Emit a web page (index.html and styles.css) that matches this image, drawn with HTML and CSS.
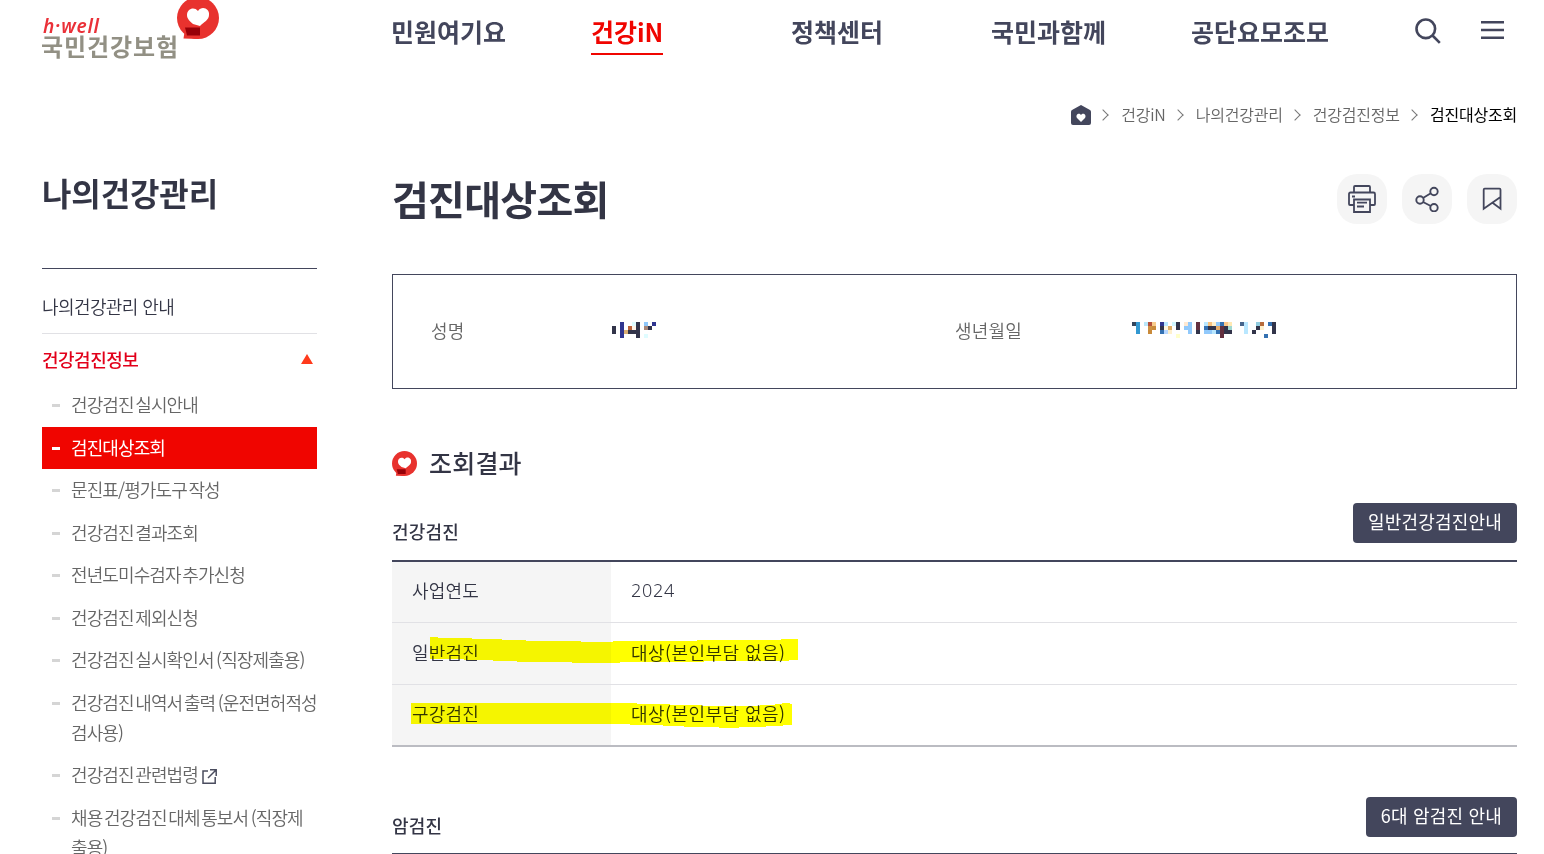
FILE: index.html
```
<!DOCTYPE html>
<html lang="ko">
  <head>
    <meta charset="UTF-8" />
    <meta name="viewport" content="width=device-width, initial-scale=1.0" />
    <title>검진대상조회</title>
    <link rel="stylesheet" href="styles.css">
  </head>
  <body>
    <svg width="0" height="0" class="defs">
      <symbol id="mark" viewBox="0 0 42 42">
        <circle cx="21" cy="21" r="21" fill="#e8322e" />
        <path d="M8 32 6.500 41.500 21 42V32Z" fill="#e8322e" />
        <path d="M21 14c4-6 12-2 11 4 0 5-5 7-9 11l-7-2c-3-3-6-5-6-9 0-6 7-9 11-4Z" fill="#fff" />
        <path d="M8 30.500h15v8H10Z" fill="#970008" />
      </symbol>
    </svg>
    <header class="header">
      <a class="logo">
        <svg width="180" height="62">
          <text x="1" y="33" class="logoEn" textLength="56">h·well</text>
          <text x="-1" y="56" class="logoKo" textLength="137">국민건강보험</text>
          <use href="#mark" x="135" y="-3" width="42" height="42" />
        </svg>
      </a>
      <nav class="nav">
        <a><span>민원여기요</span></a>
        <a class="on"><span>건강iN</span></a>
        <a><span>정책센터</span></a>
        <a><span>국민과함께</span></a>
        <a><span>공단요모조모</span></a>
      </nav>
      <div class="tools">
        <svg width="26" height="26" fill="none" stroke="#43465c" stroke-width="2.600">
          <circle cx="10.800" cy="10.800" r="9.300" />
          <path d="m17.500 17.500 7.300 7.300" />
        </svg>
        <svg width="23" height="18" fill="#43465c">
          <path d="M0 0h23v2.500H0ZM0 7.800h23v2.500H0ZM0 15.500h23V18H0Z" />
        </svg>
      </div>
    </header>
    <div class="path">
      <svg width="20" height="20">
        <path d="M10 0 19 5q1 .5 1 2v11q0 2-2 2H2q-2 0-2-2V7q0-1.500 1-2Z" fill="#43465c" />
        <path d="M10 17 6 13c-2-3 2-6 4-3 2-3 6 0 4 3Z" fill="#fff" />
      </svg>
      <i></i><span>건강iN</span>
      <i></i><span>나의건강관리</span>
      <i></i><span>건강검진정보</span>
      <i></i><b>검진대상조회</b>
    </div>
    <div class="container">
      <aside class="side">
        <h2>나의건강관리</h2>
        <div class="menu">
          <a class="depth1">나의건강관리 안내</a>
          <a class="depth1 open">건강검진정보
            <svg width="12" height="10"><path d="M6 0 12 10H0Z" fill="#ff3a1c" /></svg>
          </a>
          <ul>
            <li>건강검진 실시안내</li>
            <li class="active">검진대상조회</li>
            <li>문진표/평가도구 작성</li>
            <li>건강검진 결과조회</li>
            <li>전년도미수검자 추가신청</li>
            <li>건강검진 제외신청</li>
            <li>건강검진 실시확인서<span>(</span>직장제출용)</li>
            <li>건강검진 내역서 출력<span>(</span>운전면허적성<br>검사용)</li>
            <li>건강검진 관련법령
              <svg width="15" height="15" fill="none" stroke="#4a4c5e" stroke-width="1.500"><path d="M6 2H1v12.200h12.200V8M8 .8h6.200V7M14 1 6 9" /></svg>
            </li>
            <li>채용 건강검진 대체 통보서<span>(</span>직장제<br>출용)</li>
          </ul>
        </div>
      </aside>
      <main class="content">
        <div class="titleRow">
          <h1>검진대상조회</h1>
          <div class="btns">
            <a>
              <svg width="28" height="28" fill="none" stroke="#43465c" stroke-width="1.800">
                <path d="M6 7.500V2q0-1 1-1h14q1 0 1 1v5.500M6 20H2q-1 0-1-1V9q0-1.500 1.500-1.500h23Q27 7.500 27 9v10q0 1-1 1h-4M6 14.500h16V27H6Z" />
                <path d="M4 11.500h3M9 17.700h10M9 21.500h7" />
              </svg>
            </a>
            <a>
              <svg width="24" height="26" fill="none" stroke="#43465c" stroke-width="1.900">
                <circle cx="5" cy="14" r="3.700" /><circle cx="19" cy="5.500" r="3.700" /><circle cx="19" cy="21.700" r="3.700" />
                <path d="m8 12 7.800-4.700M8 16l7.800 4" />
              </svg>
            </a>
            <a>
              <svg width="20" height="24" fill="none" stroke="#43465c" stroke-width="1.800">
                <path d="M18.500 10 1.700 21.700V2.700q0-1 1-1h14.800q1 0 1 1v19l-8-6" />
              </svg>
            </a>
          </div>
        </div>
        <div class="person">
          <span class="label">성명</span>
          <svg class="mosaic" id="name" width="46" height="16" shape-rendering="crispEdges"></svg>
          <span class="label">생년월일</span>
          <svg class="mosaic" id="birth" width="146" height="16" shape-rendering="crispEdges"></svg>
        </div>
        <h3><svg width="25" height="25"><use href="#mark" width="25" height="25" /></svg><span>조회결과</span></h3>
        <div class="tableHead">
          <h4>건강검진</h4>
          <a class="btn">일반건강검진안내</a>
        </div>
        <div class="table">
          <div class="row"><div class="th">사업연도</div><div class="td year">2024</div></div>
          <div class="row"><div class="th">일반검진</div><div class="td">대상(본인부담 없음)</div></div>
          <div class="row"><div class="th">구강검진</div><div class="td">대상(본인부담 없음)</div></div>
          <svg class="marker" width="420" height="110" fill="#ff0" shape-rendering="crispEdges">
            <path d="M38 1h8v1h34v1h30v1h24v1h55v1h32V5h84V4h84V3h17v21h-9v1h-85v1h-84v1h-48v-1h-55v-1h-24v-1H72v-1H38Z" />
            <path d="M19 67h226v1h33v1h32v1h58v-1h15v-1h7v-1h8v1h2v21h-9v1h-17v1h-27v1h-20v-1h-35v-1h-21v-1h-33v-1H19Z" />
          </svg>
        </div>
        <div class="tableHead second">
          <h4>암검진</h4>
          <a class="btn">6대 암검진 안내</a>
        </div>
        <div class="table"></div>
      </main>
    </div>
    <script>
      // Masked values: x, y, length, color (4px cells)
      const d = "#32344a";
      const masks = {
        name: [
          [0, 1, 1, d], [0, 2, 1, d],
          [2, 0, 1, "#30358f"], [2, 1, 1, "#30358f"], [2, 2, 1, "#30358f"], [2, 3, 1, "#30358f"],
          [3, 2, 1, "#d9ae73"], [4, 1, 1, "#bb6239"], [5, 0, 1, "#dffcff"], [5, 1, 1, "#fff3e6"],
          [4, 2, 3, d], [6, 0, 1, d], [6, 1, 1, d], [6, 3, 1, d],
          [8, 0, 1, "#8fc8fb"], [8, 1, 1, "#a78678"], [9, 1, 1, d], [10, 0, 1, "#30358f"], [8, 3, 1, "#dffcff"]
        ],
        birth: [
          [0, 0, 1, "#34465d"], [1, 0, 1, "#3298d1"], [3, 0, 1, "#b9e7fa"], [4, 0, 1, "#b3503c"], [5, 0, 1, "#f8cc8c"],
          [7, 0, 1, "#30358f"], [8, 0, 1, "#b9e7ff"], [10, 0, 1, "#d0f5ff"], [11, 0, 1, d], [13, 0, 1, "#ffe9d2"],
          [14, 0, 1, "#91c9fb"], [16, 0, 1, "#63303f"], [18, 0, 1, "#b9e7ff"], [19, 0, 1, "#f8c17c"], [20, 0, 1, "#fff0cc"],
          [21, 0, 1, "#91c9fb"], [22, 0, 1, "#3471b2"], [23, 0, 1, "#fbc88a"], [24, 0, 1, "#ffe9b4"],
          [27, 0, 1, "#46648b"], [28, 0, 1, "#b9e7ff"], [31, 0, 1, "#90cce0"], [32, 0, 1, "#b76b3a"], [34, 0, 1, "#3471b2"], [35, 0, 1, d],
          [1, 1, 1, "#3298d1"], [4, 1, 1, "#ce9142"], [5, 1, 1, "#c98a3a"], [7, 1, 1, d], [8, 1, 1, "#fff6df"], [9, 1, 1, "#dfad65"],
          [11, 1, 1, d], [13, 1, 2, "#91c9fb"], [16, 1, 1, "#63303f"], [18, 1, 1, "#3471b2"], [19, 1, 2, d],
          [21, 1, 1, "#e6ad6b"], [22, 1, 1, "#63303f"], [23, 1, 1, d], [24, 1, 1, "#a0d7cf"], [28, 1, 1, "#b9e7ff"],
          [31, 1, 1, d], [32, 1, 1, "#fff0cc"], [35, 1, 1, d],
          [1, 2, 1, "#3298d1"], [4, 2, 1, "#c98a3a"], [7, 2, 1, "#3471b2"], [8, 2, 1, "#b9d8ff"], [9, 2, 1, "#fff0cc"],
          [14, 2, 1, "#91c9fb"], [16, 2, 1, d], [18, 2, 2, "#91c9fb"], [20, 2, 1, "#b9e7ff"], [21, 2, 1, "#3471b2"],
          [22, 2, 1, "#63303f"], [23, 2, 2, d], [28, 2, 1, "#b9e7ff"], [30, 2, 1, d], [35, 2, 1, d],
          [11, 3, 1, "#ffffca"], [22, 3, 1, "#63303f"], [33, 3, 1, "#3471b2"]
        ]
      };
      for (const id in masks) {
        document.querySelector("#" + id).innerHTML = masks[id]
          .map(([x, y, w, c]) => `<rect x="${x * 4}" y="${y * 4}" width="${w * 4}" height="4" fill="${c}"/>`)
          .join("");
      }
    </script>
  </body>
</html>
```
FILE: styles.css
```
* {
  box-sizing: border-box;
}
body {
  margin: 0;
  height: 854px;
  overflow: hidden;
  background: #fff;
  color: #333545;
  font-family: "Noto Sans CJK KR", sans-serif;
  font-size: 18px;
  font-weight: 350;
}
h1, h2, h3, h4, ul {
  margin: 0;
  padding: 0;
}
svg {
  display: block;
  flex: none;
}
.defs {
  position: absolute;
}
.header {
  display: flex;
  height: 75px;
  padding-left: 42px;
}
.logo {
  width: 349px;
}
.logoEn {
  font: italic 600 19px "Noto Sans", sans-serif;
  fill: #ea3038;
}
.logoKo {
  font-size: 24px;
  font-weight: 700;
  fill: #929084;
}
.nav {
  display: flex;
  width: 1024px;
}
.nav a {
  width: 200px;
  padding-top: 11px;
  font-size: 25px;
  font-weight: 700;
  line-height: 40px;
  white-space: nowrap;
  color: #43465c;
}
.nav span {
  display: inline-block;
  height: 44px;
}
.nav .on span {
  color: #f00500;
  border-bottom: 2px solid #f00500;
}
.tools {
  display: flex;
  gap: 40px;
  padding-top: 18px;
}
.tools svg + svg {
  margin-top: 3px;
}
.path {
  display: flex;
  justify-content: flex-end;
  align-items: center;
  height: 80px;
  padding-right: 27px;
  font-size: 16px;
  letter-spacing: -0.2px;
  color: #666;
}
.path span, .path b {
  padding-bottom: 2px;
}
.path b {
  font-weight: 400;
  color: #000;
}
.path i {
  width: 8px;
  height: 8px;
  margin: 0 14px 0 8px;
  border: solid #777;
  border-width: 1px 1px 0 0;
  transform: rotate(45deg);
}
.container {
  display: flex;
  gap: 75px;
  padding: 0 27px 0 42px;
}
.side {
  width: 275px;
}
.side h2 {
  height: 113px;
  padding-top: 13px;
  font-size: 32px;
  line-height: 48px;
  letter-spacing: -0.1px;
}
.menu {
  border-top: 1px solid #43465c;
  padding-top: 12px;
  letter-spacing: -0.9px;
}
.depth1 {
  display: flex;
  justify-content: space-between;
  align-items: center;
  height: 53px;
  padding-bottom: 2px;
  border-bottom: 1px solid #e1e1e5;
  letter-spacing: -0.6px;
}
.depth1.open {
  height: 50px;
  padding: 0 4px 0 0;
  border: 0;
  font-weight: 500;
  letter-spacing: -0.5px;
  color: #e2001a;
}
.side ul {
  list-style: none;
}
.side li {
  padding: 5px 0 7.5px 29px;
  line-height: 30px;
  white-space: nowrap;
  word-spacing: -2.5px;
  color: #666;
}
.side li::before {
  content: "";
  display: inline-block;
  width: 8px;
  height: 3px;
  margin: 0 11px 0 -19px;
  vertical-align: 5px;
  background: #d5d5d5;
}
.side li span {
  margin-left: 2.5px;
}
.side li svg {
  display: inline-block;
  margin-left: 2px;
  vertical-align: -2px;
}
.side .active {
  background: #f00500;
  color: #fff;
  font-weight: 400;
}
.side .active::before {
  background: #fff;
}
.content {
  width: 1125px;
}
.titleRow {
  display: flex;
  justify-content: space-between;
  height: 119px;
  padding-top: 19px;
}
h1 {
  margin-top: -1px;
  font-size: 40px;
  line-height: 50px;
  letter-spacing: -0.7px;
}
.btns {
  display: flex;
  gap: 15px;
}
.btns a {
  display: flex;
  align-items: center;
  justify-content: center;
  width: 50px;
  height: 50px;
  border-radius: 20px;
  background: #f5f5f5;
}
.person {
  display: grid;
  grid-template-columns: 181px 343px 177px 1fr;
  align-items: center;
  height: 115px;
  padding: 0 0 4px 38px;
  border: 1px solid #43465c;
}
.label {
  letter-spacing: 0.2px;
  color: #666;
}
h3 {
  display: flex;
  align-items: center;
  gap: 12px;
  height: 114px;
  padding-top: 34px;
  font-size: 25px;
  font-weight: 500;
  letter-spacing: 0.2px;
}
h3 span {
  padding-bottom: 2px;
}
.tableHead {
  display: flex;
  justify-content: space-between;
  height: 57px;
  letter-spacing: 0.2px;
}
h4 {
  padding-top: 15px;
  font-size: 18px;
  font-weight: 500;
}
.btn {
  height: 40px;
  padding: 0 15px;
  border-radius: 4px;
  background: #43465c;
  color: #fff;
  font-weight: 400;
  line-height: 37px;
}
.table {
  position: relative;
  border-top: 2px solid #43465c;
  border-bottom: 2px solid #bbbcc2;
}
.row {
  display: flex;
  height: 61px;
  line-height: 57px;
  border-bottom: 1px solid #e1e1e5;
}
.row:nth-child(2) {
  height: 62px;
  line-height: 58px;
}
.row:nth-child(3) {
  border: 0;
  height: 60px;
}
.th {
  width: 219px;
  padding-left: 20px;
  letter-spacing: 0.2px;
  background: #f5f5f5;
}
.td {
  padding-left: 20px;
  letter-spacing: 0.45px;
}
.year {
  font-family: "Noto Sans", sans-serif;
  letter-spacing: 0.7px;
}
.marker {
  position: absolute;
  left: 0;
  top: 74px;
  mix-blend-mode: multiply;
}
.second {
  margin-top: 50px;
  height: 56px;
}
```
